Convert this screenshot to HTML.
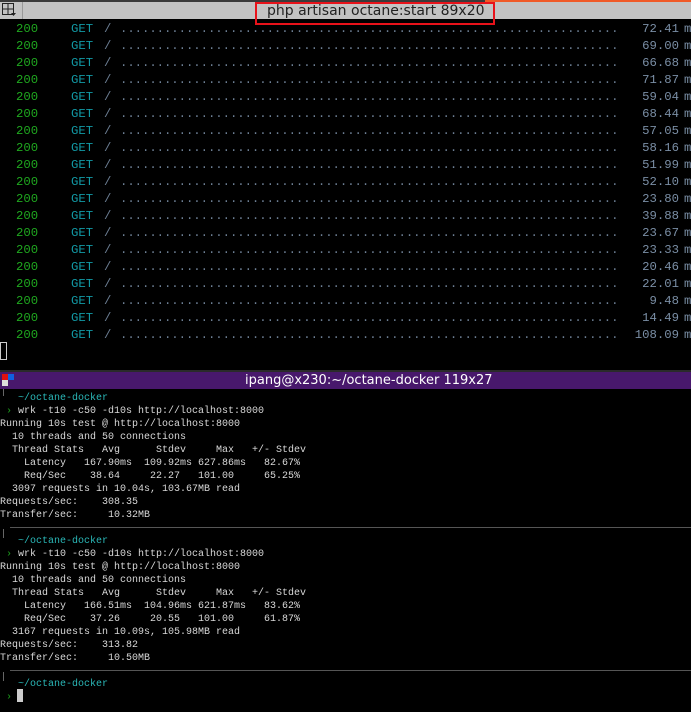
<!DOCTYPE html>
<html><head><meta charset="utf-8"><style>
body{margin:0;width:691px;height:712px;background:#000;overflow:hidden;position:relative;font-family:"Liberation Mono",monospace}
.a{position:absolute;white-space:pre}
.top{position:absolute;left:0;top:0;width:691px;height:19px;background:#c3c3c3}
.r{font-size:12.3px;line-height:17px;height:17px}
.g{color:#1fa81f}.c{color:#129aa6}.d{color:#6d7f94}.n{color:#7a8ea5}
.b{font-size:10px;line-height:13px;color:#d8d8d8}
.t{color:#2ab7b7}
</style></head><body>
<div class="top"></div>
<div class="a" style="left:485px;top:0;width:206px;height:2px;background:#f05a28"></div>
<div class="a" style="left:0;top:0;width:485px;height:2px;background:#3a3a3a"></div>
<svg class="a" style="left:2px;top:3px" width="16" height="15"><rect x="0.5" y="0.5" width="11" height="11" fill="none" stroke="#222"/><line x1="6" y1="0" x2="6" y2="12" stroke="#222"/><line x1="0" y1="6" x2="12" y2="6" stroke="#222"/><path d="M9 10h5l-2.5 3z" fill="#222"/></svg>
<div class="a" style="left:22px;top:2px;width:1px;height:17px;background:#999"></div>
<div class="a" style="left:255px;top:2px;width:236px;height:19px;border:2px solid #e8121a;box-sizing:content-box"></div>
<div class="a" style="left:267px;top:2px;font-family:'DejaVu Sans',sans-serif;font-size:14px;line-height:18px;color:#222">php artisan octane:start 89x20</div>
<div id="rows"></div>
<div class="a" style="left:0;top:342px;width:7px;height:18px;border:1px solid #ccc;box-sizing:border-box"></div>
<div class="a" style="left:0;top:372px;width:691px;height:17px;background:#48186c"></div>
<div class="a" style="left:0;top:370px;width:691px;height:2px;background:#2a2a2a"></div>
<div class="a" style="left:2px;top:374px;width:6px;height:6px;background:#e01010"></div>
<div class="a" style="left:8px;top:374px;width:6px;height:6px;background:#1060e0"></div>
<div class="a" style="left:2px;top:380px;width:6px;height:6px;background:#ddd"></div>
<div class="a" style="left:245px;top:372px;font-family:'DejaVu Sans',sans-serif;font-size:13px;line-height:18px;color:#fff">ipang@x230:~/octane-docker 119x27</div>
<div class="a" style="left:10px;top:527px;width:681px;height:1px;background:#555"></div>
<div class="a" style="left:10px;top:670px;width:681px;height:1px;background:#555"></div>
<div class="a" style="left:3px;top:529px;width:1px;height:9px;background:#666"></div>
<div class="a" style="left:3px;top:672px;width:1px;height:9px;background:#666"></div>
<div class="a" style="left:3px;top:389px;width:1px;height:7px;background:#666"></div>
<div class="a b" style="left:0;top:392px"><span class="t">   ~/octane-docker</span>
<span style="color:#1fa81f"> ›</span> wrk -t10 -c50 -d10s http://localhost:8000
Running 10s test @ http://localhost:8000
  10 threads and 50 connections
  Thread Stats   Avg      Stdev     Max   +/- Stdev
    Latency   167.90ms  109.92ms 627.86ms   82.67%
    Req/Sec    38.64     22.27   101.00     65.25%
  3097 requests in 10.04s, 103.67MB read
Requests/sec:    308.35
Transfer/sec:     10.32MB</div>
<div class="a b" style="left:0;top:535px"><span class="t">   ~/octane-docker</span>
<span style="color:#1fa81f"> ›</span> wrk -t10 -c50 -d10s http://localhost:8000
Running 10s test @ http://localhost:8000
  10 threads and 50 connections
  Thread Stats   Avg      Stdev     Max   +/- Stdev
    Latency   166.51ms  104.96ms 621.87ms   83.62%
    Req/Sec    37.26     20.55   101.00     61.87%
  3167 requests in 10.09s, 105.98MB read
Requests/sec:    313.82
Transfer/sec:     10.50MB</div>
<div class="a b" style="left:0;top:678px"><span class="t">   ~/octane-docker</span>
<span style="color:#1fa81f"> ›</span></div>
<div class="a" style="left:17px;top:689px;width:6px;height:13px;background:#ccc"></div>
<script>
var v=["72.41","69.00","66.68","71.87","59.04","68.44","57.05","58.16","51.99","52.10","23.80","39.88","23.67","23.33","20.46","22.01","9.48","14.49","108.09"];
var h="";
for(var i=0;i<v.length;i++){var y=21+17*i;
h+='<div class="a r g" style="left:16px;top:'+y+'px">200</div>'+
'<div class="a r c" style="left:71px;top:'+y+'px">GET</div>'+
'<div class="a r d" style="left:104px;top:'+y+'px">/</div>'+
'<div class="a r d" style="left:120px;top:'+y+'px;letter-spacing:-0.05px">'+'.'.repeat(68)+'</div>'+
'<div class="a r n" style="right:12px;top:'+y+'px">'+v[i]+'</div>'+
'<div class="a r n" style="left:684px;top:'+y+'px">m</div>';}
document.getElementById("rows").innerHTML=h;
</script>
</body></html>
